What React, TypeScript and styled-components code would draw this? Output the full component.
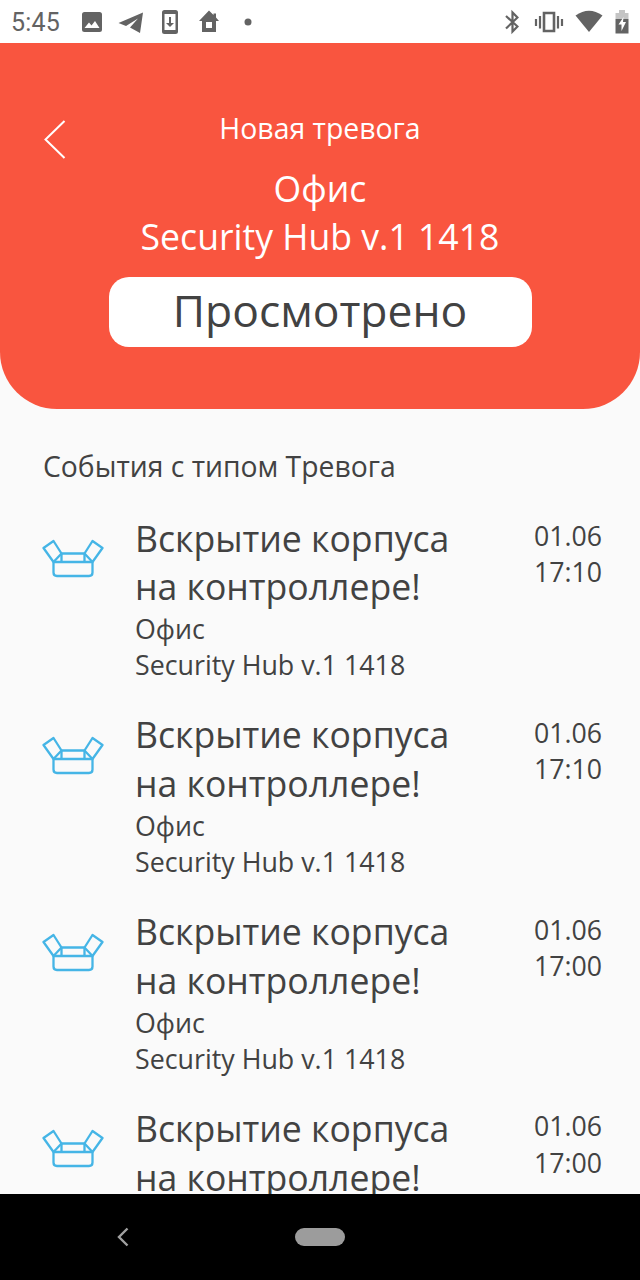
import React from 'react';
import styled, { createGlobalStyle } from 'styled-components';

const GlobalStyle = createGlobalStyle`
  * { box-sizing: border-box; }
  html, body { margin: 0; padding: 0; background: #fafafa; }
  body { overflow: hidden; }
`;

const Screen = styled.div`
  width: 640px;
  height: 1280px;
  display: flex;
  flex-direction: column;
  overflow: hidden;
  background: #fafafa;
  color: #424242;
  font-family: 'Open Sans', 'Noto Sans', sans-serif;
`;

const StatusBar = styled.div`
  flex: none;
  height: 43px;
  padding: 0 11px 0 11px;
  display: flex;
  align-items: center;
  justify-content: space-between;
  background: #fff;
  color: #636363;
`;

const StatusGroup = styled.div`
  display: flex;
  align-items: center;
  height: 43px;
`;

const Clock = styled.span`
  width: 70px;
  padding-top: 1px;
  font: 400 25px/43px Roboto, sans-serif;
  letter-spacing: 0.2px;
`;

const StatusIcon = styled.svg<{ $w: number; $gap?: number }>`
  display: block;
  flex: none;
  width: ${({ $w }) => $w}px;
  height: 28px;
  margin-left: ${({ $gap = 0 }) => $gap}px;
  fill: currentColor;
`;

const Header = styled.header`
  flex: none;
  height: 366px;
  padding: 66px 43px 0;
  display: grid;
  grid-template-columns: 24px 1fr 24px;
  align-items: start;
  background: #f9553f;
  border-radius: 0 0 57px 57px;
  color: #fff;
`;

const BackButton = styled.button`
  margin: 10px 0 0;
  padding: 0;
  border: 0;
  background: none;
  width: 24px;
  height: 42px;
`;

const HeaderBody = styled.div`
  display: flex;
  flex-direction: column;
  align-items: center;
  white-space: nowrap;
`;

const Caption = styled.div`
  font-size: 28.4px;
  line-height: 39px;
`;

const Heading = styled.h1`
  margin: 16px 0 0;
  font-size: 35.6px;
  font-weight: 400;
  line-height: 48px;
  text-align: center;
`;

const SeenButton = styled.button`
  width: 423px;
  height: 70px;
  margin: 17px 0 0;
  padding: 0 0 4px;
  border: 0;
  border-radius: 20px;
  background: #fff;
  color: #424242;
  font: 400 44.4px/66px 'Open Sans', 'Noto Sans', sans-serif;
`;

const Events = styled.main`
  flex: 1;
  min-height: 0;
  overflow: hidden;
  padding: 38px 38px 0 43px;
`;

const SectionTitle = styled.h2`
  margin: 0;
  font-size: 28.3px;
  font-weight: 400;
  line-height: 39px;
  white-space: nowrap;
`;

const EventList = styled.div`
  margin-top: 27px;
  display: flex;
  flex-direction: column;
  gap: 26.8px;
`;

const EventRow = styled.article`
  height: 170px;
  display: grid;
  grid-template-columns: 92px 1fr auto;
  white-space: nowrap;
`;

const BoxIcon = styled.svg`
  display: block;
  width: 62px;
  height: 40px;
  margin-top: 26px;
  margin-left: -1px;
  fill: none;
  stroke: #45b5e6;
  stroke-width: 2.3;
  stroke-linejoin: round;
`;

const EventTitle = styled.div`
  padding-top: 0.6px;
  font-size: 35.6px;
  line-height: 48.6px;
`;

const EventText = styled.div`
  padding-top: 0.4px;
  font-size: 26.8px;
  line-height: 36.2px;
`;

const EventTime = styled.div`
  padding-top: 5px;
  font-size: 26.7px;
  line-height: 36.2px;
  text-align: right;
`;

const NavBar = styled.nav`
  flex: none;
  height: 86px;
  display: grid;
  grid-template-columns: 1fr 50px 1fr;
  align-items: center;
  background: #000;
`;

const NavBack = styled.svg`
  display: block;
  width: 14px;
  height: 20px;
  margin-left: 116px;
  fill: none;
  stroke: #a0a0a0;
  stroke-width: 2.4;
`;

const HomePill = styled.div`
  height: 18px;
  border-radius: 9px;
  background: #9c9c9c;
`;

const events = [
  { time: '17:10', details: true },
  { time: '17:10', details: true },
  { time: '17:00', details: true },
  { time: '17:00', details: false },
];

const OpenBox = () => (
  <BoxIcon viewBox="0 0 62 40">
    <path d="M11.500 23V33.500Q11.500 37 15 37H47Q50.500 37 50.500 33.500V23Z" />
    <path d="M11.500 23L1.500 9L11.500 2L19.500 14.500Z" />
    <path d="M50.500 23L60.500 9L50.500 2L42.500 14.500Z" />
    <path d="M19.500 14.500H42.500M19.500 14.500V23M42.500 14.500V23" />
  </BoxIcon>
);

export default function App() {
  return (
    <Screen>
      <GlobalStyle />
      <StatusBar>
        <StatusGroup>
          <Clock>5:45</Clock>
          <StatusIcon $w={22} viewBox="0 0 22 28">
            <path fillRule="evenodd" d="M3.500 4H18.500Q21 4 21 6.500V21.500Q21 24 18.500 24H3.500Q1 24 1 21.500V6.500Q1 4 3.500 4ZM3.500 20H18.500L14 13L10.500 17.500L8 14.500Z" />
          </StatusIcon>
          <StatusIcon $w={26} $gap={15} viewBox="0 0 26 28">
            <path d="M0.500 15L25 4.500L22 25L12 19.500L20 10.500L8 18Z" />
          </StatusIcon>
          <StatusIcon $w={18} $gap={17} viewBox="0 0 18 28">
            <path fillRule="evenodd" d="M3.500 2H14.500Q17 2 17 4.500V23.500Q17 26 14.500 26H3.500Q1 26 1 23.500V4.500Q1 2 3.500 2ZM3.500 6V22H14.500V6ZM8 9H10V15H13L9 19L5 15H8Z" />
          </StatusIcon>
          <StatusIcon $w={20} $gap={20} viewBox="0 0 20 28">
            <path fillRule="evenodd" d="M10 2.500L14.500 7V5.500H17V9.500L20 13H17V24H3V13H0ZM7 14V20H13V14Z" />
          </StatusIcon>
          <StatusIcon $w={8} $gap={25} viewBox="0 0 8 28">
            <circle cx="4" cy="14" r="3.500" />
          </StatusIcon>
        </StatusGroup>
        <StatusGroup>
          <StatusIcon $w={14} viewBox="0 0 14 28">
            <path d="M1 8L12.500 18.500L7.500 23.500V4.500L12.500 9.500L1 20.500" fill="none" stroke="currentColor" strokeWidth="2.200" />
          </StatusIcon>
          <StatusIcon $w={30} $gap={15} viewBox="0 0 30 28">
            <path fill="none" stroke="currentColor" strokeWidth="2.600" d="M10 5H20V23H10Z" />
            <path fill="none" stroke="currentColor" strokeWidth="2.200" d="M6 8V20.500M2 11V18M24 8V20.500M28 11V18" />
          </StatusIcon>
          <StatusIcon $w={28} $gap={11} viewBox="0 0 28 28">
            <path d="M0.500 7.500Q14 -2 27.500 7.500L14 24Z" />
          </StatusIcon>
          <StatusIcon $w={14} $gap={12} viewBox="0 0 14 28">
            <path opacity=".38" d="M4 2H10V5H13.500V11H0.500V5H4Z" />
            <path d="M0.500 11H13.500V25.500H0.500Z" />
            <path fill="#fff" d="M8.500 9L3.500 16.500H6.500V23L11 14H8Z" />
          </StatusIcon>
        </StatusGroup>
      </StatusBar>
      <Header>
        <BackButton aria-label="Назад">
          <svg width="24" height="42" viewBox="0 0 24 42" fill="none" stroke="#fff" strokeWidth="2">
            <path d="M21.500 2L2.500 20.500L21.500 39" />
          </svg>
        </BackButton>
        <HeaderBody>
          <Caption>Новая тревога</Caption>
          <Heading>Офис<br />Security Hub v.1 1418</Heading>
          <SeenButton>Просмотрено</SeenButton>
        </HeaderBody>
      </Header>
      <Events>
        <SectionTitle>События с типом Тревога</SectionTitle>
        <EventList>
          {events.map(({ time, details }, i) => (
            <EventRow key={i}>
              <OpenBox />
              <div>
                <EventTitle>Вскрытие корпуса<br />на контроллере!</EventTitle>
                {details && <EventText>Офис<br />Security Hub v.1 1418</EventText>}
              </div>
              <EventTime>01.06<br />{time}</EventTime>
            </EventRow>
          ))}
        </EventList>
      </Events>
      <NavBar>
        <NavBack viewBox="0 0 14 20"><path d="M11.500 1.500L3 10L11.500 18.500" /></NavBack>
        <HomePill />
      </NavBar>
    </Screen>
  );
}
